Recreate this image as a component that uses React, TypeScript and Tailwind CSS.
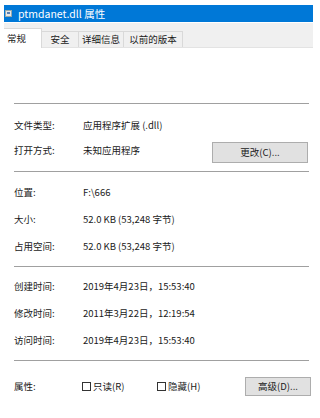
import React from "react";

const font = { fontFamily: '"Noto Sans CJK SC", "Noto Sans", sans-serif' };

function Row({ label, value, h = "h-[27px]" }: { label: string; value: string; h?: string }) {
  return (
    <div className={`flex items-center ${h}`}>
      <span className="w-[69px]">{label}</span>
      <span>{value}</span>
    </div>
  );
}

function Checkbox({ label }: { label: string }) {
  return (
    <div className="flex items-center">
      <span className="w-[9px] h-[9px] border border-[#333] bg-white mr-[2px]" />
      <span>{label}</span>
    </div>
  );
}

export default function App() {
  return (
    <div
      className="w-[320px] h-[418px] bg-white overflow-hidden text-[9.5px] leading-[13px] text-[#1a1a1a]"
      style={font}
    >
      {/* 标题栏 */}
      <div className="ml-[4px] mt-[5px] w-[309px] h-[17px] bg-[#0078d7] flex items-center text-white text-[10.5px]">
        <svg width="8" height="8" viewBox="0 0 8 8" className="ml-[1px] mr-[5px]">
          <rect x="0.5" y="0.5" width="6" height="6" fill="#e8e8e8" stroke="#9aa" />
          <rect x="2" y="2" width="3" height="2" fill="#5a7fb0" />
        </svg>
        <span className="mt-[-1px]">ptmdanet.dll 属性</span>
      </div>

      {/* 标签页 */}
      <div className="ml-[4px] mt-[1px] w-[309px] h-[25px] bg-[#f0f0f0] flex items-end border-b border-[#e3e3e3]">
        <div className="w-[38px] h-[20px] bg-white border-t border-r border-[#d9d9d9] flex items-center pl-[3px] mb-[-1px]">
          常规
        </div>
        <div className="w-[37px] h-[16px] border-t border-r border-[#d9d9d9] flex items-center justify-center">
          安全
        </div>
        <div className="w-[45px] h-[16px] border-t border-r border-[#d9d9d9] flex items-center justify-center">
          详细信息
        </div>
        <div className="w-[59px] h-[16px] border-t border-r border-[#d9d9d9] flex items-center justify-center">
          以前的版本
        </div>
      </div>

      {/* 内容 */}
      <div className="pl-[14px] pr-[11px]">
        <div className="h-[55px]" />
        <div className="h-px bg-[#a0a0a0]" />

        <div className="mt-[10px]">
          <Row label="文件类型:" value="应用程序扩展 (.dll)" h="h-[22px]" />
          <div className="flex items-center h-[22px] mt-[5px]">
            <span className="w-[69px] mt-[-3px]">打开方式:</span>
            <span className="flex-1 mt-[-3px]">未知应用程序</span>
            <button className="w-[96px] h-[21px] bg-[#e1e1e1] border border-[#adadad] mr-[1px]">
              更改(C)...
            </button>
          </div>
        </div>

        <div className="h-px bg-[#a0a0a0] mt-[8px]" />

        <div className="mt-[7px]">
          <Row label="位置:" value="F:\666" />
          <Row label="大小:" value="52.0 KB (53,248 字节)" />
          <Row label="占用空间:" value="52.0 KB (53,248 字节)" />
        </div>

        <div className="h-px bg-[#a0a0a0] mt-[6px]" />

        <div className="mt-[6px]">
          <Row label="创建时间:" value="2019年4月23日，15:53:40" />
          <Row label="修改时间:" value="2011年3月22日，12:19:54" />
          <Row label="访问时间:" value="2019年4月23日，15:53:40" />
        </div>

        <div className="h-px bg-[#a0a0a0] mt-[6px]" />

        <div className="flex items-center h-[22px] mt-[14px]">
          <span className="w-[68px]">属性:</span>
          <div className="w-[75px]">
            <Checkbox label="只读(R)" />
          </div>
          <div className="flex-1">
            <Checkbox label="隐藏(H)" />
          </div>
          <button className="w-[66px] h-[19px] bg-[#e1e1e1] border border-[#adadad] mr-[-2px]">
            高级(D)...
          </button>
        </div>
      </div>
    </div>
  );
}
